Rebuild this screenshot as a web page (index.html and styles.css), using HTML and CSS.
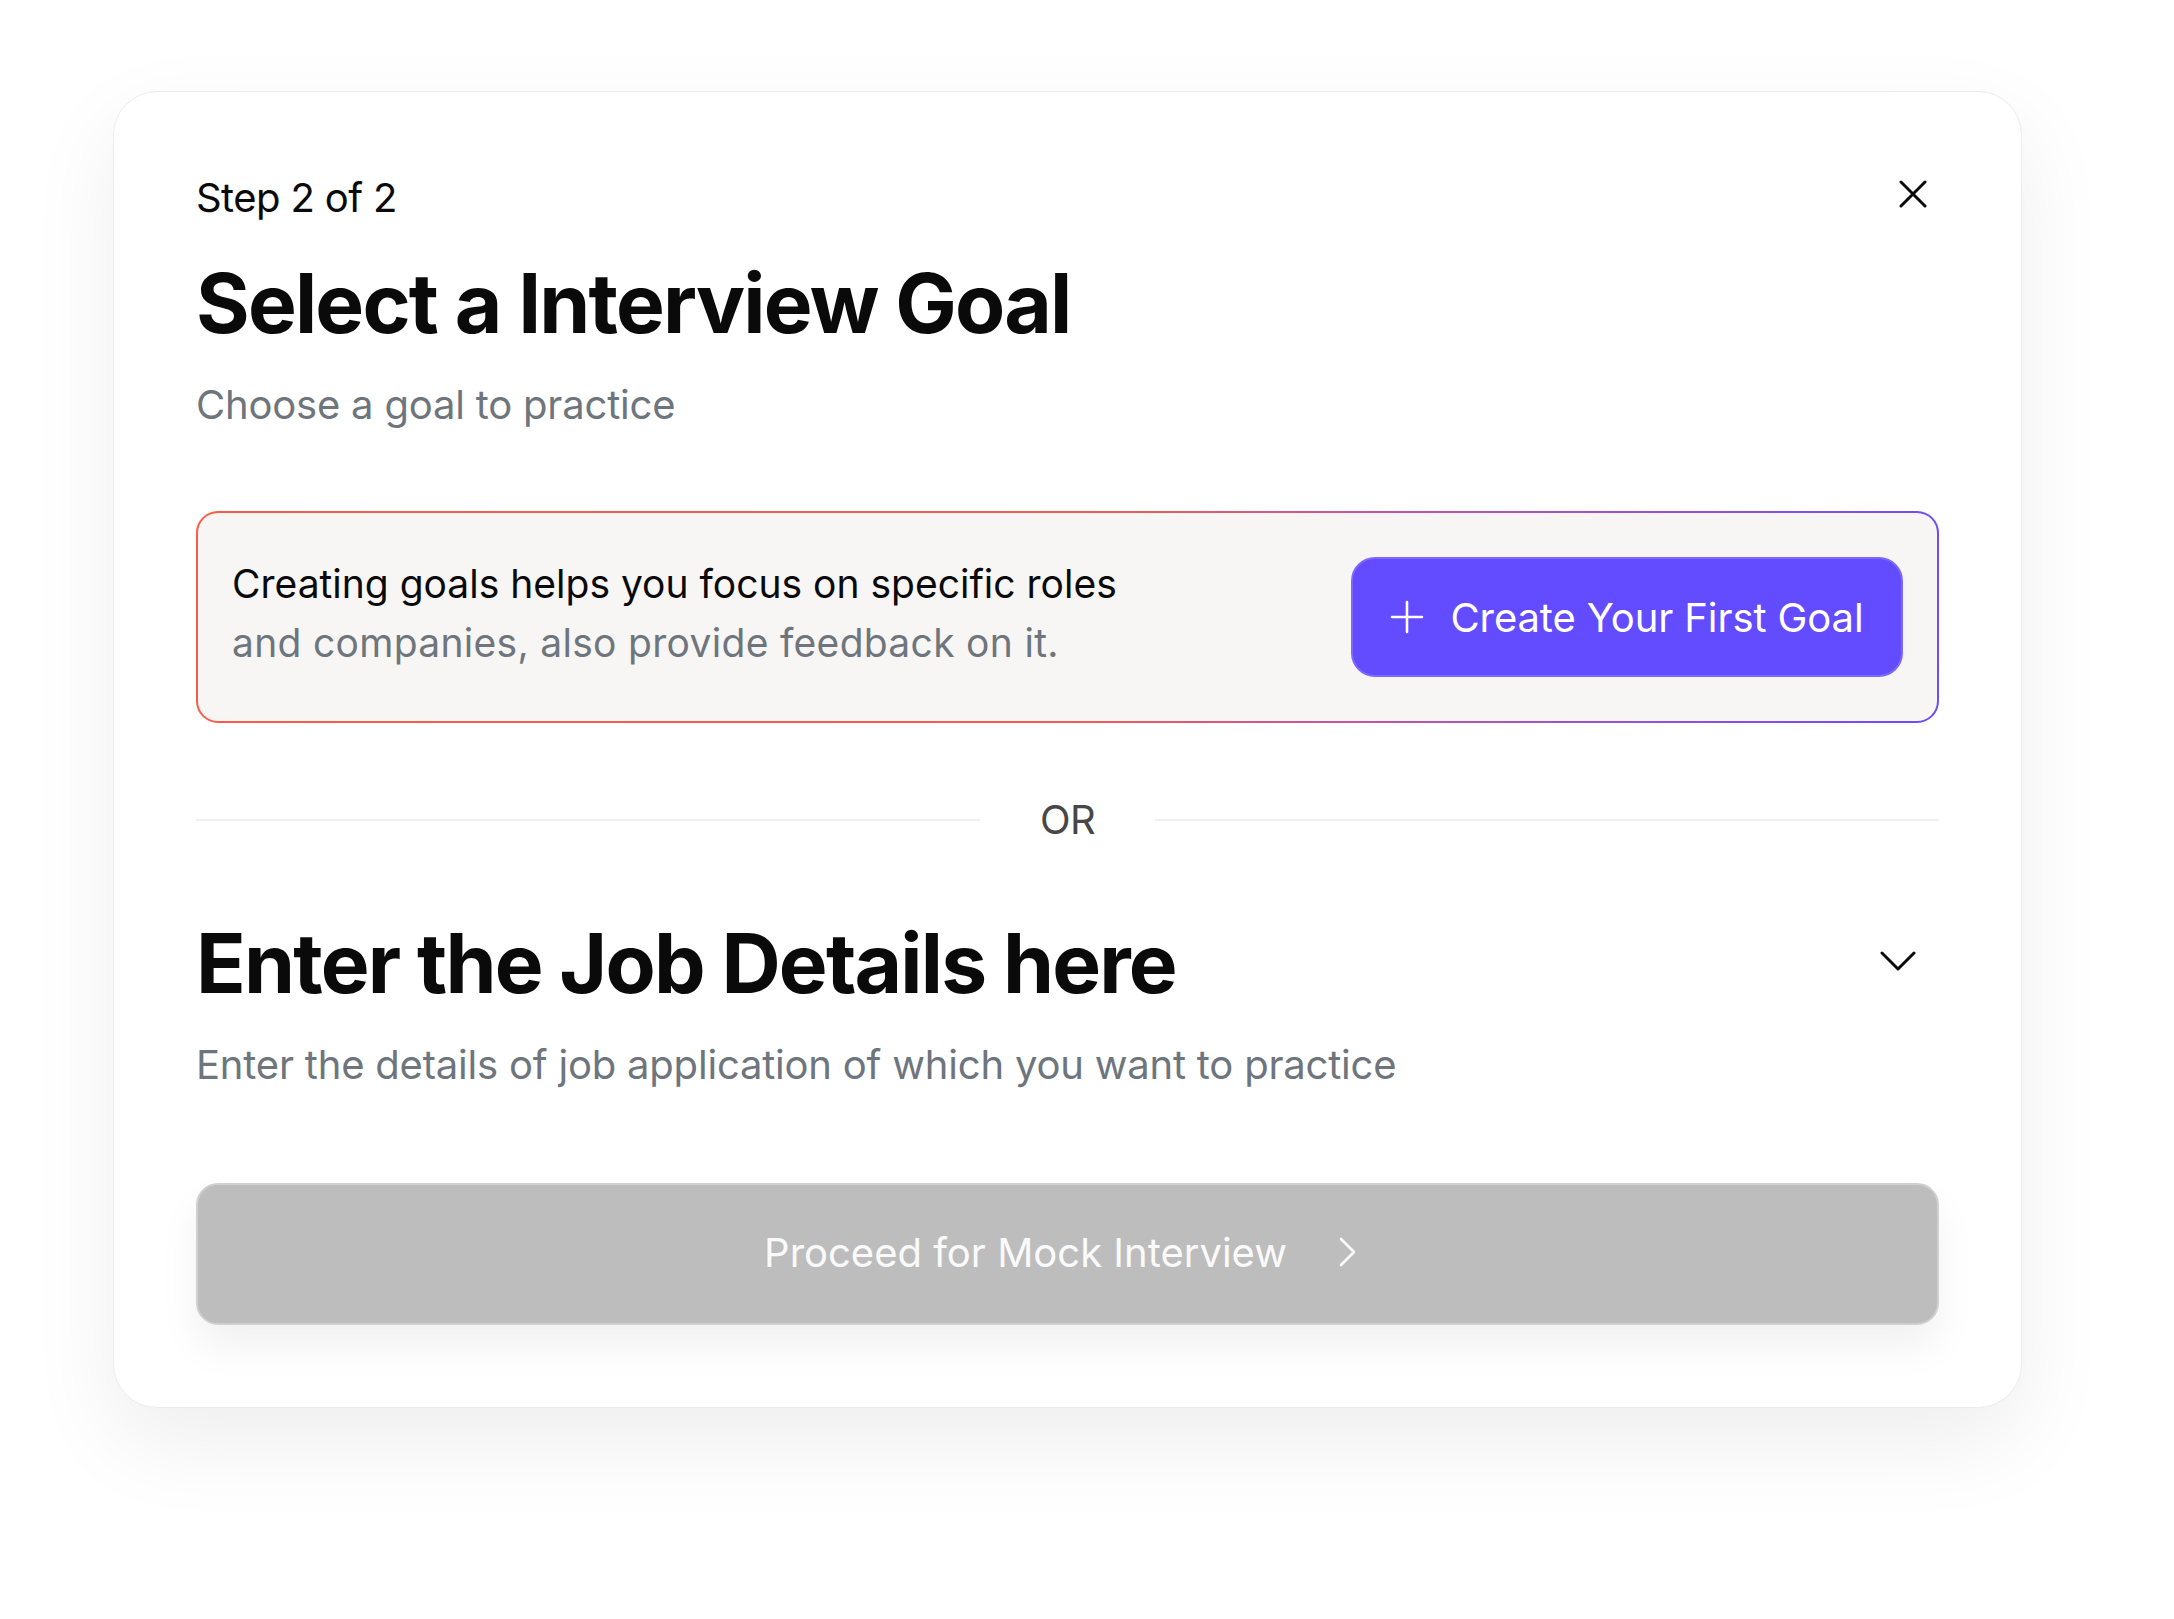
FILE: index.html
```html
<!DOCTYPE html>
<html lang="en">
<head>
<meta charset="utf-8">
<title>Select a Interview Goal</title>
<link rel="stylesheet" href="styles.css">
</head>
<body>
<div class="page">
  <section class="card">
    <header class="card-head">
      <p class="step">Step 2 of 2</p>
      <button class="close" aria-label="Close">
        <svg width="28" height="28" viewBox="0 0 28 28"><path d="M2 2 L26 26 M26 2 L2 26" stroke="#0a0a0a" stroke-width="3" stroke-linecap="round" fill="none"/></svg>
      </button>
    </header>
    <h1 class="title">Select a Interview Goal</h1>
    <p class="subtitle">Choose a goal to practice</p>

    <div class="goal-box">
      <p class="goal-text"><span class="dark">Creating goals helps you focus on specific roles</span><br><span class="muted">and companies, also provide feedback on it.</span></p>
      <button class="create-btn">
        <svg width="34" height="34" viewBox="0 0 34 34"><path d="M17 2 V32 M2 17 H32" stroke="#ffffff" stroke-width="2.6" stroke-linecap="round" fill="none"/></svg>
        <span>Create Your First Goal</span>
      </button>
    </div>

    <div class="divider">
      <span class="line"></span>
      <span class="or">OR</span>
      <span class="line"></span>
    </div>

    <div class="job-head">
      <h2 class="title">Enter the Job Details here</h2>
      <svg class="chev-down" width="36" height="20" viewBox="0 0 36 20"><path d="M2 2 L18 18 L34 2" stroke="#0a0a0a" stroke-width="3" stroke-linecap="round" stroke-linejoin="round" fill="none"/></svg>
    </div>
    <p class="subtitle desc">Enter the details of job application of which you want to practice</p>

    <button class="proceed-btn">
      <span>Proceed for Mock Interview</span>
      <svg width="18" height="30" viewBox="0 0 18 30"><path d="M2 2 L15 15 L2 28" stroke="#ffffff" stroke-width="2.6" stroke-linecap="round" stroke-linejoin="round" fill="none"/></svg>
    </button>
  </section>
</div>
</body>
</html>
```

FILE: styles.css
```css
* { box-sizing: border-box; }

html, body {
  margin: 0;
  padding: 0;
  background: #ffffff;
}

body {
  font-family: Inter, "Noto Sans", sans-serif;
  color: #0a0a0a;
}

.page {
  min-height: 1619px;
  padding: 91px 0 120px 113px;
}

.card {
  width: 1909px;
  height: 1317px;
  background: #ffffff;
  border: 1px solid #ececec;
  border-radius: 44px;
  box-shadow: 0 34px 90px rgba(0, 0, 0, 0.07);
  padding: 82px 82px 0 82px;
}

.card-head {
  display: flex;
  justify-content: space-between;
  align-items: center;
}

.step {
  margin: 0;
  font-size: 40px;
  line-height: 48px;
  font-weight: 400;
  letter-spacing: -0.6px;
}

.close {
  border: 0;
  background: none;
  padding: 0;
  margin: -8px 12px 0 0;
  width: 28px;
  height: 28px;
  display: flex;
}

.title {
  margin: 32px 0 0 0;
  font-size: 82px;
  line-height: 100px;
  font-weight: 700;
  letter-spacing: -1.8px;
}

.subtitle {
  margin: 27px 0 0 0;
  font-size: 40px;
  line-height: 48px;
  font-weight: 400;
  color: #6e757d;
  letter-spacing: -0.2px;
}

.goal-box {
  margin-top: 82px;
  height: 212px;
  border: 2px solid transparent;
  border-radius: 22px;
  background:
    linear-gradient(#f7f6f5, #f7f6f5) padding-box,
    linear-gradient(100deg, #fb5c48 0%, #f45a55 52%, #c254a4 68%, #9a50d6 82%, #6a4cff 100%) border-box;
  padding: 0 34px 0 34px;
  display: flex;
  align-items: center;
  justify-content: space-between;
}

.goal-text {
  margin: 0 0 8px 0;
  font-size: 39px;
  line-height: 59px;
  letter-spacing: 0;
}

.goal-text .dark { color: #0a0a0a; }
.goal-text .muted { color: #6e757d; letter-spacing: 0.3px; }

.create-btn {
  width: 552px;
  height: 120px;
  border: 2px solid #7c68ff;
  border-radius: 24px;
  background: #634bff;
  color: #ffffff;
  font-family: Inter, "Noto Sans", sans-serif;
  font-size: 40px;
  letter-spacing: -0.1px;
  display: flex;
  align-items: center;
  justify-content: center;
  gap: 26px;
  padding: 0;
}

.divider {
  margin-top: 73px;
  display: flex;
  align-items: center;
  gap: 60px;
  height: 48px;
}

.divider .line {
  flex: 1;
  height: 2px;
  background: #efefef;
}

.divider .or {
  font-size: 40px;
  line-height: 48px;
  color: #474747;
  letter-spacing: -0.6px;
}

.job-head {
  margin-top: 70px;
  display: flex;
  align-items: center;
  justify-content: space-between;
}

.job-head .title {
  margin: 0;
}

.chev-down {
  margin: 0 23px 7px 0;
}

.desc {
  margin-top: 27px;
}

.proceed-btn {
  margin-top: 94px;
  width: 100%;
  height: 142px;
  border: 2px solid #d0d0d0;
  border-radius: 22px;
  background: #bdbdbd;
  box-shadow: 0 22px 40px rgba(0, 0, 0, 0.06);
  color: #fafafa;
  font-family: Inter, "Noto Sans", sans-serif;
  font-size: 40px;
  letter-spacing: 0;
  display: flex;
  align-items: center;
  justify-content: center;
  gap: 52px;
  padding: 0 14px 4px 0;
}
```
